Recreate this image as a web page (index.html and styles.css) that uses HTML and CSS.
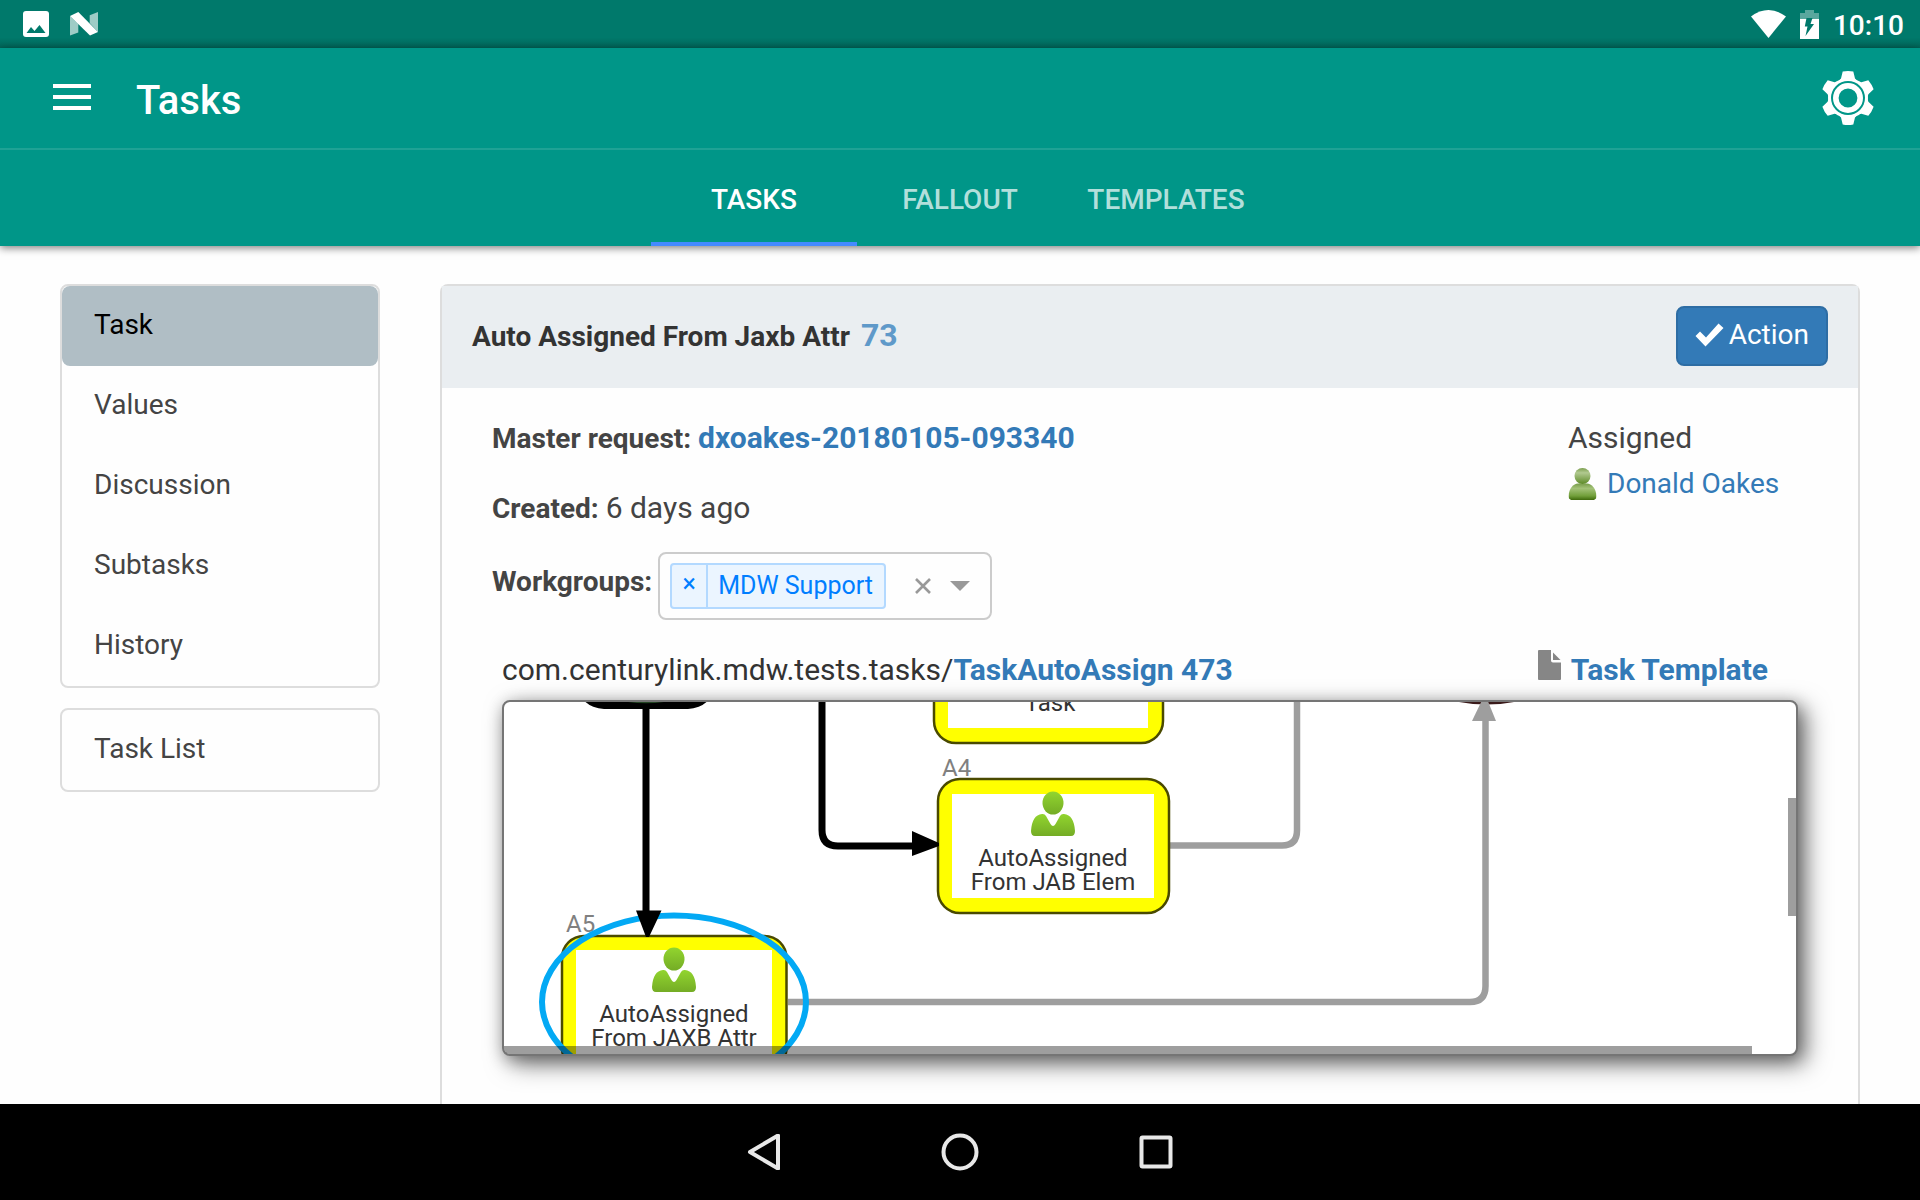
FILE: index.html
```html
<!DOCTYPE html>
<html lang="en">
<head>
<meta charset="utf-8">
<meta name="viewport" content="width=device-width, initial-scale=1">
<title>Tasks</title>
<link rel="stylesheet" href="styles.css">
</head>
<body>
<div class="status-bar">
  <div class="status-group">
    <svg width="26" height="26" viewBox="0 0 26 26"><rect width="26" height="26" rx="3" fill="#fff"/><path d="M3.500 22 8 16l3.500 4L16.500 14 22.500 22z" fill="#00796b"/></svg>
    <svg width="28" height="24" viewBox="0 0 28 24" fill="#fff"><path d="M0 4 8.300 12v8.500L0 23.500zM19.700 3.300 28 0v20L19.700 11z" opacity=".62"/><path d="M0 4 8.300 0 28 20 20 23.500z"/></svg>
  </div>
  <div class="status-group status-right">
    <svg class="wifi" width="35" height="28" viewBox="0 0 35 28"><path d="M17.500 28 0 6.500Q17.500-6.300 35 6.500z" fill="#fff"/></svg>
    <svg class="battery" width="19" height="29" viewBox="0 0 19 29"><path d="M5 0h9v3h5v6H0V3h5z" fill="#fff" opacity=".35"/><path d="M0 9h19v20H0z" fill="#fff"/><path d="M6.500 8h6L10.500 14H14L5.500 26 7.500 16.500H4.800z" fill="#00796b"/></svg>
    <span class="clock">10:10</span>
  </div>
</div>

<header class="app-header">
  <div class="toolbar">
    <button class="icon-button" type="button" aria-label="Menu"><svg width="38" height="26" viewBox="0 0 38 26" fill="#fff"><path d="M0 0h38v4H0zM0 11h38v4H0zM0 22h38v4H0z"/></svg></button>
    <h1 class="app-title">Tasks</h1>
    <button class="icon-button gear" type="button" aria-label="Settings">
      <svg width="54" height="54" viewBox="-27 -27 54 54">
        <defs><path id="tooth" d="M-5.300-26.500Q0-27.500 5.300-26.500L7-19.500 11-15h-22L-7-19.500z"/></defs>
        <g fill="#fff"><circle r="20"/><use href="#tooth"/><use href="#tooth" transform="rotate(60)"/><use href="#tooth" transform="rotate(120)"/><use href="#tooth" transform="rotate(180)"/><use href="#tooth" transform="rotate(240)"/><use href="#tooth" transform="rotate(300)"/></g>
        <circle r="17" fill="#009688"/><circle r="12.200" fill="none" stroke="#fff" stroke-width="5.600"/>
      </svg>
    </button>
  </div>
  <nav class="tabs">
    <a class="tab active" href="#tasks">TASKS</a>
    <a class="tab" href="#fallout">FALLOUT</a>
    <a class="tab" href="#templates">TEMPLATES</a>
  </nav>
</header>

<main class="content">
  <aside class="sidebar">
    <nav class="menu">
      <a class="menu-item active" href="#task">Task</a>
      <a class="menu-item" href="#values">Values</a>
      <a class="menu-item" href="#discussion">Discussion</a>
      <a class="menu-item" href="#subtasks">Subtasks</a>
      <a class="menu-item" href="#history">History</a>
    </nav>
    <nav class="menu">
      <a class="menu-item" href="#list">Task List</a>
    </nav>
  </aside>

  <section class="panel">
    <div class="panel-heading">
      <h2 class="panel-title">Auto Assigned From Jaxb Attr <a class="task-id" href="#73">73</a></h2>
      <button class="action-button" type="button"><svg width="29" height="24" viewBox="0 0 29 24"><path d="M5 8.500 11 14.500 23.500.500 28.500 5 10.500 23.500.500 13z" fill="#fff"/></svg>Action</button>
    </div>
    <div class="panel-body">
      <div class="summary">
        <div class="fields">
          <div class="field"><span class="label">Master request: </span><a class="strong" href="#request">dxoakes-20180105-093340</a></div>
          <div class="field"><span class="label">Created: </span>6 days ago</div>
          <div class="field workgroups">
            <span class="label" id="wg">Workgroups:</span>
            <div class="multi-select" role="group" aria-labelledby="wg">
              <div class="chip"><button class="chip-remove" type="button" aria-label="Remove">×</button><span class="chip-text">MDW Support</span></div>
              <button class="select-icon" type="button" aria-label="Clear"><svg width="16" height="16" viewBox="0 0 16 16"><path d="M1 1 15 15M15 1 1 15" stroke="#999" stroke-width="2.600"/></svg></button>
              <button class="select-icon" type="button" aria-label="Open"><svg width="20" height="10" viewBox="0 0 20 10"><path d="M0 0h20L10 10z" fill="#999"/></svg></button>
            </div>
          </div>
        </div>
        <div class="assignee">
          <div>Assigned</div>
          <a class="user" href="#user"><svg width="29" height="32" viewBox="0 0 29 32">
            <defs>
              <linearGradient id="head" x2="0" y2="1"><stop offset="0" stop-color="#7c9f4f"/><stop offset=".3" stop-color="#b1c990"/><stop offset="1" stop-color="#5e8b28"/></linearGradient>
              <linearGradient id="torso" x2="0" y2="1"><stop offset="0" stop-color="#789d4a"/><stop offset=".3" stop-color="#a3c278"/><stop offset=".75" stop-color="#719f3a"/><stop offset="1" stop-color="#3f6a0c"/></linearGradient>
            </defs>
            <path d="M1 30.500C-.500 22 5 15.500 10 15.500h9C24 15.500 29.500 22 28 30.500L26 32H3z" fill="url(#torso)"/><circle cx="14.500" cy="8" r="8" fill="url(#head)"/></svg>Donald Oakes</a>
        </div>
      </div>

      <div class="process-head">
        <div class="process-name">com.centurylink.mdw.tests.tasks/<a class="strong" href="#process">TaskAutoAssign 473</a></div>
        <a class="strong template" href="#template"><svg width="23" height="30" viewBox="0 0 23 30" fill="#868686"><path d="M1 0h12v10.500q0 2 2 2h8V29q0 1-1 1H1q-1 0-1-1V1Q0 0 1 0z"/><path d="M15 2.500V10h7.500z"/></svg>Task Template</a>
      </div>

      <div class="viewer">
        <svg class="diagram" width="1292" height="352" viewBox="504 702 1292 352">
          <defs>
            <linearGradient id="green" x2="0" y2="1"><stop offset="0" stop-color="#92d52f"/><stop offset="1" stop-color="#74ac25"/></linearGradient>
            <g id="person" fill="url(#green)"><ellipse cx="0" cy="-11" rx="10.500" ry="11.500"/><path d="M-11 0Q-8.500-.500-7 2L-2.500 10Q0 14 2.500 10L7 2Q8.500-.500 11 0 21 1 22 17 22 22 18 22H-18Q-22 22-22 17-21 1-11 0z"/></g>
          </defs>
          <rect x="576" y="640" width="140" height="69" rx="28"/>
          <path d="M628 702h36q-18 2.500-36 0z" fill="#234523"/>
          <path d="M1459 702h55q-27 5-55 0z" fill="#3a1a1a"/>
          <g fill="none" stroke="#9e9e9e" stroke-width="6.500">
            <path d="M1170 845.500h112q15 0 15-15V702"/>
            <path d="M788 1002h682q15.500 0 15.500-16V715"/>
          </g>
          <path d="M1485 694 1496 721h-24z" fill="#9e9e9e"/>
          <path d="M822 702v128q0 16 16 16h76" fill="none" stroke="#000" stroke-width="7"/>
          <g fill="#ff0" stroke="#4a4a00" stroke-width="2.500">
            <rect x="934" y="606" width="229" height="137" rx="22"/>
            <rect x="938" y="779" width="231" height="134" rx="22"/>
            <rect x="562" y="936" width="224.500" height="134" rx="22"/>
          </g>
          <g fill="#fff"><rect x="948" y="620" width="200" height="108"/><rect x="952" y="794" width="202" height="104"/><rect x="576" y="950" width="196" height="104"/></g>
          <use href="#person" x="1053" y="814"/>
          <use href="#person" x="674" y="970"/>
          <g class="step-text" text-anchor="middle">
            <text x="1050" y="711">Task</text>
            <text x="1053" y="866">AutoAssigned</text><text x="1053" y="890">From JAB Elem</text>
            <text x="674" y="1022">AutoAssigned</text><text x="674" y="1046">From JAXB Attr</text>
          </g>
          <g class="step-id"><text x="942" y="776">A4</text><text x="566" y="932">A5</text></g>
          <ellipse cx="674" cy="1002" rx="132" ry="86.500" fill="none" stroke="#03a9f4" stroke-width="6"/>
          <path d="M646 706v206" stroke="#000" stroke-width="7"/>
          <path d="M636 910.500h25.500L649 937h-3zM912 831v25l27-10v-3z"/>
        </svg>
        <div class="thumb thumb-x"></div>
        <div class="thumb thumb-y"></div>
      </div>
    </div>
  </section>
</main>

<nav class="system-nav">
  <button class="nav-key" type="button" aria-label="Back"><svg width="36" height="36" viewBox="0 0 36 36"><path d="M4 18 32 1.500v33z"/></svg></button>
  <button class="nav-key" type="button" aria-label="Home"><svg width="38" height="38" viewBox="0 0 38 38"><circle cx="19" cy="19" r="16.500"/></svg></button>
  <button class="nav-key" type="button" aria-label="Recent apps"><svg width="34" height="34" viewBox="0 0 34 34"><rect x="2.500" y="2.500" width="29" height="29" rx="1"/></svg></button>
</nav>
</body>
</html>
```
FILE: styles.css
```css
* { box-sizing: border-box; }

body {
  margin: 0;
  height: 100vh;
  display: flex;
  flex-direction: column;
  overflow: hidden;
  background: #fefefe;
  color: #444;
  font: 30px/40px Roboto, "Liberation Sans", sans-serif;
}

a { color: #337ab7; text-decoration: none; }
button { font: inherit; border: 0; padding: 0; background: none; cursor: pointer; }
svg { display: block; flex: none; }

/* Status bar */
.status-bar {
  flex: none;
  height: 48px;
  padding: 0 16px 0 23px;
  display: flex;
  justify-content: space-between;
  align-items: center;
  background: linear-gradient(#00796b 38px, #006458);
  color: #fff;
}
.status-group { display: flex; align-items: center; gap: 21px; }
.status-right { gap: 14px; }
.clock { font-size: 28px; font-weight: 500; line-height: 48px; padding-top: 3px; }

/* Header */
.app-header {
  flex: none;
  position: relative;
  background: #009688;
  box-shadow: 0 2px 8px rgba(0, 0, 0, .5);
}
.toolbar {
  height: 102px;
  padding: 0 45px 2px 53px;
  display: flex;
  align-items: center;
  border-bottom: 2px solid #1fa295;
}
.gear { padding-top: 2px; }
.app-title { flex: 1; margin: 0; padding: 8px 0 0 45px; color: #fff; font-size: 40px; font-weight: 500; }
.tabs { height: 96px; display: flex; justify-content: center; }
.tab {
  width: 206px;
  padding-top: 8px;
  display: flex;
  align-items: center;
  justify-content: center;
  border-bottom: 4px solid transparent;
  color: #b2dfdb;
  font-size: 28px;
  font-weight: 500;
}
.tab.active { color: #fff; border-bottom-color: #448aff; }

/* Content */
.content {
  flex: 1;
  min-height: 0;
  overflow: hidden;
  display: flex;
  gap: 60px;
  padding: 38px 60px 0;
}

.sidebar { flex: none; width: 320px; display: flex; flex-direction: column; gap: 20px; }
.menu { border: 2px solid #ddd; border-radius: 8px; }
.menu-item {
  display: block;
  padding: 19px 32px 21px;
  border-radius: 8px;
  color: #444;
  font-size: 28px;
}
.menu-item.active { background: #b0bec5; color: #000; }

.panel {
  flex: 1;
  min-width: 0;
  border: 2px solid #ddd;
  border-bottom: 0;
  border-radius: 8px 8px 0 0;
}
.panel-heading {
  display: flex;
  justify-content: space-between;
  align-items: center;
  padding: 20px 30px 22px;
  background: #eaeef1;
}
.panel-title { margin: 0; color: #333; font-size: 28px; font-weight: 700; }
.task-id { margin-left: 4px; color: #5f99c9; font-size: 32px; }
.action-button {
  height: 60px;
  padding: 0 17px 2px;
  display: flex;
  align-items: center;
  gap: 5px;
  border: 2px solid #2e6da4;
  border-radius: 8px;
  background: #337ab7;
  color: #fff;
  font-size: 28px;
}

.panel-body { padding: 30px 60px 0; }
.summary { display: flex; justify-content: space-between; margin-left: -10px; }
.field { margin-bottom: 30px; }
.label { font-size: 28px; font-weight: 700; line-height: 28px; }
.strong { font-weight: 700; }
.workgroups { display: flex; align-items: center; gap: 6px; margin-top: -6px; }
.workgroups .label { padding-bottom: 8px; }

.multi-select {
  height: 68px;
  padding: 0 20px 0 10px;
  display: flex;
  align-items: center;
  border: 2px solid #ccc;
  border-radius: 8px;
}
.chip {
  display: flex;
  height: 46px;
  margin-right: 10px;
  border: 2px solid #b3d9ff;
  border-radius: 4px;
  background: #ebf5ff;
  color: #007eff;
  font-size: 25px;
}
.chip-remove { width: 36px; border-right: 2px solid #b3d9ff; color: inherit; line-height: 36px; padding-bottom: 4px; }
.chip-text { padding: 0 11px 0 10px; line-height: 42px; }
.select-icon { margin-left: 19px; }

.assignee { flex: none; width: 230px; display: flex; flex-direction: column; gap: 6px; }
.user { display: flex; align-items: center; gap: 10px; font-size: 28px; }

.process-head { display: flex; justify-content: space-between; padding-right: 30px; margin-bottom: 10px; }
.process-name { color: #333; }
.template { display: flex; gap: 10px; }

.viewer {
  position: relative;
  overflow: hidden;
  border: 2px solid #757575;
  border-radius: 8px;
  background: #fff;
  box-shadow: 8px 8px 24px rgba(0, 0, 0, .5), 2px 4px 16px rgba(0, 0, 0, .3);
}
.step-text { font-size: 24px; fill: #333; }
.step-id { font-size: 24px; fill: #808080; }
.thumb { position: absolute; background: rgba(0, 0, 0, .38); }
.thumb-x { left: 0; right: 44px; bottom: 0; height: 8px; }
.thumb-y { right: 0; top: 96px; width: 8px; height: 118px; }

/* System navigation */
.system-nav {
  flex: none;
  position: relative;
  height: 96px;
  display: flex;
  justify-content: center;
  background: #000;
}
.nav-key { width: 196px; display: flex; align-items: center; justify-content: center; }
.nav-key svg { fill: none; stroke: #e8e8e8; stroke-width: 4; stroke-linejoin: round; }
```
